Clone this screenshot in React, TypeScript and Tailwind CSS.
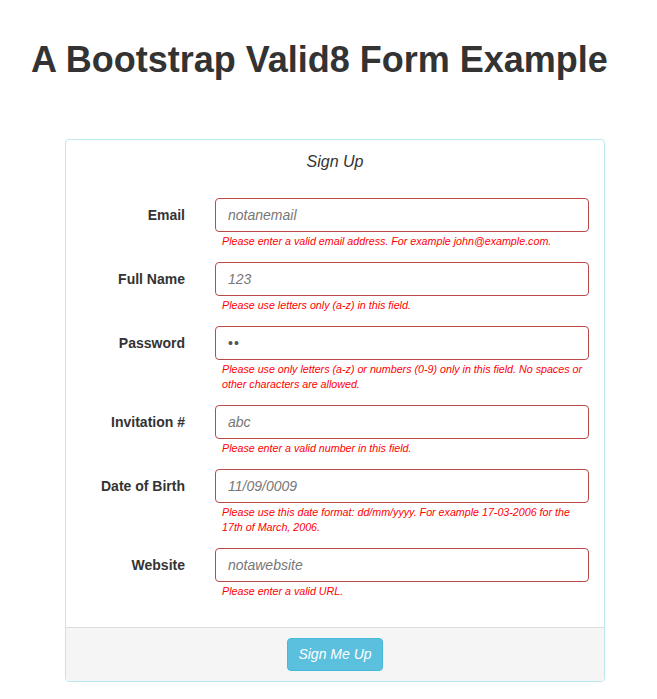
import React from 'react';

type Field = {
  label: string;
  value: string;
  error: string;
  password?: boolean;
};

const fields: Field[] = [
  { label: 'Email', value: 'notanemail', error: 'Please enter a valid email address. For example john@example.com.' },
  { label: 'Full Name', value: '123', error: 'Please use letters only (a-z) in this field.' },
  {
    label: 'Password',
    value: '••',
    password: true,
    error: 'Please use only letters (a-z) or numbers (0-9) only in this field. No spaces or other characters are allowed.',
  },
  { label: 'Invitation #', value: 'abc', error: 'Please enter a valid number in this field.' },
  {
    label: 'Date of Birth',
    value: '11/09/0009',
    error: 'Please use this date format: dd/mm/yyyy. For example 17-03-2006 for the 17th of March, 2006.',
  },
  { label: 'Website', value: 'notawebsite', error: 'Please enter a valid URL.' },
];

function FormRow({ field }: { field: Field }) {
  return (
    <div className="flex items-start gap-[30px] mb-[13px]">
      <label className="w-[105px] shrink-0 text-right text-[14px] font-bold text-[#333] leading-[34px]">
        {field.label}
      </label>
      <div className="flex-1">
        <div className="h-[34px] rounded-[4px] border border-[#b94a48] px-[12px] flex items-center">
          {field.password ? (
            <span className="text-[#555] text-[14px] tracking-[1px]">{field.value}</span>
          ) : (
            <span className="italic text-[#777] text-[14px]">{field.value}</span>
          )}
        </div>
        <p className="mt-[2px] pl-[7px] pr-[4px] italic text-[10.7px] leading-[15px] text-[#ff0000]">{field.error}</p>
      </div>
    </div>
  );
}

export default function App() {
  return (
    <div className="min-h-screen bg-white font-['Liberation_Sans',Arial,sans-serif] text-[#333]">
      <h1 className="pl-[31px] pt-[38px] text-[36px] font-bold leading-[44px] text-[#333]">
        A Bootstrap Valid8 Form Example
      </h1>

      <div className="mt-[57px] ml-[65px] w-[540px] rounded-[4px] border border-[#bce8f1] overflow-hidden">
        <div className="pt-[11px] pb-[9px] text-center italic text-[16px] leading-[22px] text-[#333]">Sign Up</div>
        <div className="pl-[14px] pr-[15px] pt-[16px] pb-[15px]">
          {fields.map((f) => (
            <FormRow key={f.label} field={f} />
          ))}
        </div>
        <div className="border-t border-[#ddd] bg-[#f5f5f5] py-[10px] flex justify-center">
          <button
            type="button"
            className="h-[33px] w-[96px] rounded-[4px] border border-[#46b8da] bg-[#5bc0de] text-white italic text-[14px]"
          >
            Sign Me Up
          </button>
        </div>
      </div>
    </div>
  );
}
